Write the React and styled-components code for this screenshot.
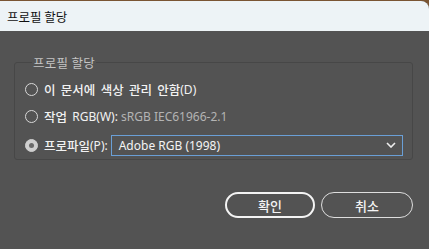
import { createGlobalStyle, styled } from "styled-components";

const GlobalStyle = createGlobalStyle`
  html, body {
    margin: 0;
    padding: 0;
    background: #7a5533;
  }
  body {
    font-family: "Noto Sans", "Noto Sans CJK KR", sans-serif;
  }
`;

const Win = styled.div`
  width: 429px;
  height: 248px;
  margin-top: 1px;
  background: #535353;
  border-top-right-radius: 8px;
  overflow: hidden;
  display: flex;
  flex-direction: column;
`;

const TitleBar = styled.div`
  height: 30px;
  background: #edf3f6;
  display: flex;
  align-items: center;
  padding-left: 7px;
  font-family: "Noto Sans CJK KR", sans-serif;
  font-size: 12.5px;
  color: #111;
`;

const Body = styled.div`
  flex: 1;
  padding: 22px 16px 0 14px;
  display: flex;
  flex-direction: column;
`;

const Group = styled.fieldset`
  margin: 0;
  height: 107px;
  box-sizing: border-box;
  border: 1px solid #474747;
  border-radius: 3px;
  padding: 4px 9px 0 10px;
  display: flex;
  flex-direction: column;
`;

const Legend = styled.legend`
  padding: 0 1px;
  margin-left: 7px;
  font-family: "Noto Sans CJK KR", sans-serif;
  font-size: 12.5px;
  letter-spacing: 0.3px;
  color: #c4c4c4;
`;

const Row = styled.label`
  display: flex;
  align-items: center;
  height: ${(p) => p.h}px;
  gap: 6px;
  color: #f2f2f2;
  white-space: nowrap;
`;

const Radio = styled.span`
  width: 11px;
  height: 11px;
  border-radius: 50%;
  border: 1px solid ${(p) => (p.checked ? "#cfcfcf" : "#d8d8d8")};
  background: ${(p) => (p.checked ? "#cfcfcf" : "transparent")};
  display: flex;
  align-items: center;
  justify-content: center;
  flex-shrink: 0;

  &::after {
    content: "";
    display: ${(p) => (p.checked ? "block" : "none")};
    width: 5px;
    height: 5px;
    border-radius: 50%;
    background: #6a6a6a;
  }
`;

const Ko = styled.span`
  font-family: "Noto Sans CJK KR", sans-serif;
  font-size: 12.5px;
  font-weight: 500;
  word-spacing: 2.5px;
`;

const Lat = styled.span`
  font-family: "Noto Sans", sans-serif;
  font-size: 12px;
  color: ${(p) => p.color || "#f2f2f2"};
`;

const Label = styled.span`
  display: flex;
  align-items: center;
`;

const Select = styled.div`
  flex: 1;
  height: 21px;
  box-sizing: border-box;
  border: 1px solid #6a9fd6;
  margin-left: -3px;
  padding: 0 6px 0 7px;
  display: flex;
  align-items: center;
  justify-content: space-between;
  color: #f4f4f4;
  font-size: 12px;
`;

const Buttons = styled.div`
  display: flex;
  justify-content: flex-end;
  gap: 6px;
  margin-top: 32px;
`;

const Btn = styled.button`
  width: ${(p) => p.w}px;
  height: 26px;
  box-sizing: border-box;
  border-radius: 13px;
  background: transparent;
  border: ${(p) => (p.primary ? "2px solid #f4f4f4" : "1px solid #dedede")};
  color: #f4f4f4;
  font-family: "Noto Sans CJK KR", sans-serif;
  font-size: 13px;
  font-weight: 500;
  padding: 0;
`;

const Chevron = () => (
  <svg width="10" height="6" viewBox="0 0 10 6">
    <path d="M1 1 L5 5 L9 1" stroke="#eee" strokeWidth="1.6" fill="none" />
  </svg>
);

export default function App() {
  return (
    <>
      <GlobalStyle />
      <Win>
        <TitleBar>프로필 할당</TitleBar>
        <Body>
          <Group>
            <Legend>프로필 할당</Legend>
            <Row h={26}>
              <Radio />
              <Label>
                <Ko>이 문서에 색상 관리 안함</Ko>
                <Lat>(D)</Lat>
              </Label>
            </Row>
            <Row h={28}>
              <Radio />
              <Label>
                <Ko>작업&nbsp;</Ko>
                <Lat>RGB(W):&nbsp;</Lat>
                <Lat color="#b4b4b4">sRGB IEC61966-2.1</Lat>
              </Label>
            </Row>
            <Row h={30}>
              <Radio checked />
              <Label>
                <Ko>프로파일</Ko>
                <Lat>(P):</Lat>
              </Label>
              <Select>
                <span>Adobe RGB (1998)</span>
                <Chevron />
              </Select>
            </Row>
          </Group>
          <Buttons>
            <Btn primary w={90}>확인</Btn>
            <Btn w={92}>취소</Btn>
          </Buttons>
        </Body>
      </Win>
    </>
  );
}
